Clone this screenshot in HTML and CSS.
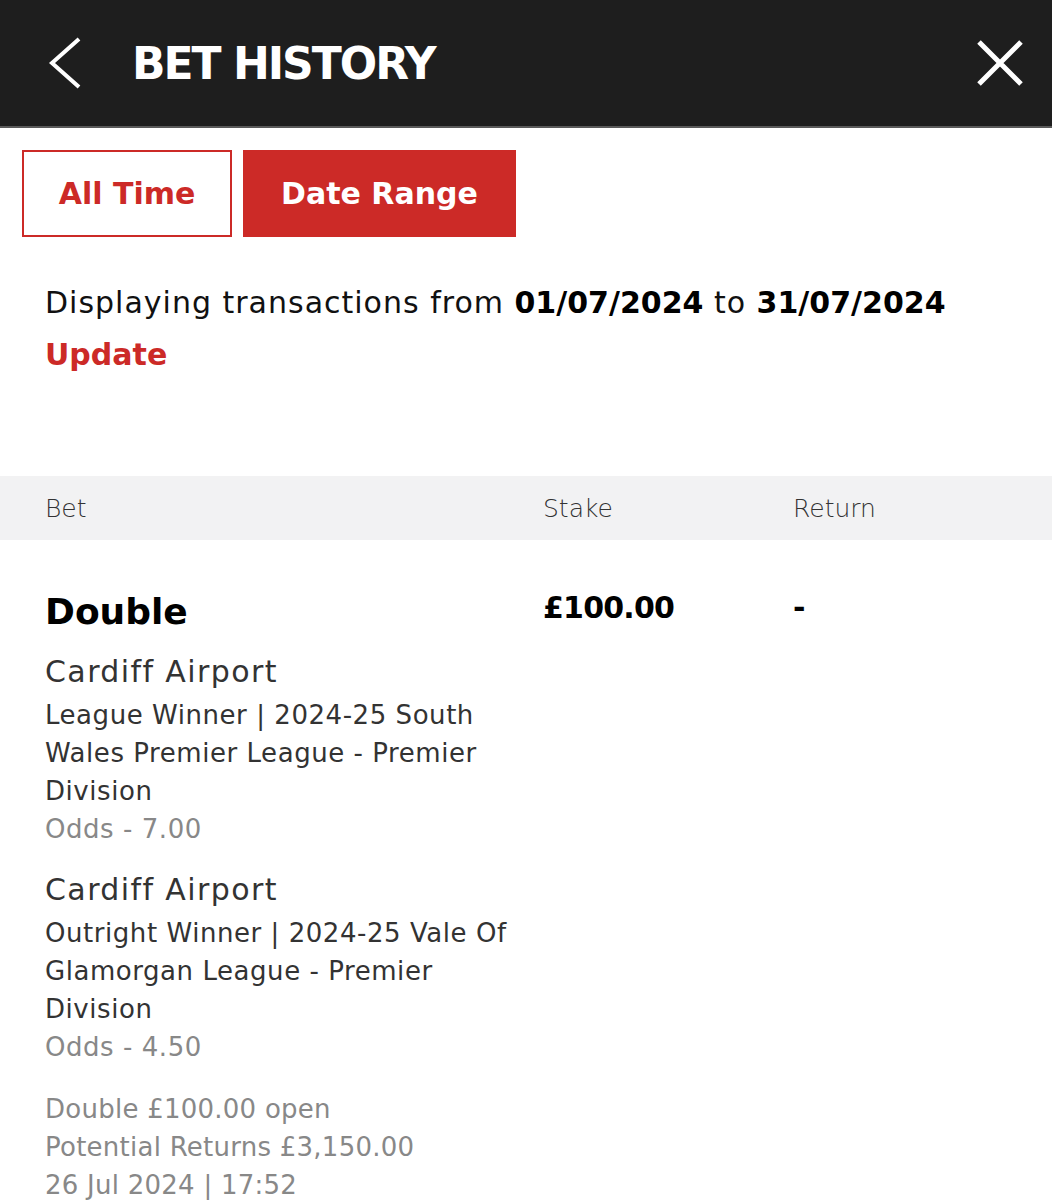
FILE: index.html
```html
<!DOCTYPE html>
<html>
<head>
<meta charset="utf-8">
<link rel="stylesheet" href="styles.css">
</head>
<body>
<header class="topbar">
  <div class="topbar-left">
    <svg class="icon-back" width="34" height="52" viewBox="0 0 34 52"><polyline points="31,2 4,26 31,50" fill="none" stroke="#fff" stroke-width="4"/></svg>
    <h1 class="title">BET HISTORY</h1>
  </div>
  <svg class="icon-close" width="48" height="48" viewBox="0 0 48 48"><path d="M3 3 L45 45 M45 3 L3 45" stroke="#fff" stroke-width="5" fill="none"/></svg>
</header>
<main class="content">
  <div class="tabs">
    <button class="tab tab-outline">All Time</button>
    <button class="tab tab-filled">Date Range</button>
  </div>
  <p class="range">Displaying transactions from <b>01/07/2024</b> to <b>31/07/2024</b></p>
  <a class="update">Update</a>
</main>
<div class="thead">
  <span class="col-bet">Bet</span>
  <span class="col-stake">Stake</span>
  <span class="col-return">Return</span>
</div>
<section class="row">
  <div class="col-bet">
    <div class="bet-type">Double</div>
    <div class="leg">
      <div class="leg-name">Cardiff Airport</div>
      <div class="leg-market">League Winner | 2024-25 South Wales Premier League - Premier Division</div>
      <div class="leg-odds">Odds - 7.00</div>
    </div>
    <div class="leg">
      <div class="leg-name">Cardiff Airport</div>
      <div class="leg-market">Outright Winner | 2024-25 Vale Of Glamorgan League - Premier Division</div>
      <div class="leg-odds">Odds - 4.50</div>
    </div>
    <div class="summary">
      <div>Double £100.00 open</div>
      <div>Potential Returns £3,150.00</div>
      <div>26 Jul 2024 | 17:52</div>
    </div>
  </div>
  <div class="col-stake stake-val">£100.00</div>
  <div class="col-return return-val">-</div>
</section>
</body>
</html>
```
FILE: styles.css
```css
* { box-sizing: border-box; }
html, body { margin: 0; padding: 0; background: #fff; }
body { font-family: "DejaVu Sans", sans-serif; color: #111; width: 1052px; overflow: hidden; }

.topbar {
  height: 128px;
  background: #1e1e1e;
  border-bottom: 2px solid #5a5a5a;
  display: flex;
  align-items: center;
  justify-content: space-between;
  padding: 0 28px 0 48px;
}
.topbar-left { display: flex; align-items: center; gap: 50px; }
.icon-back { display: block; }
.icon-close { display: block; }
.title {
  margin: 0;
  color: #fff;
  font-size: 44px;
  font-weight: bold;
  letter-spacing: -2px;
}

.content { padding: 22px 22px 0 22px; height: 348px; }
.tabs { display: flex; gap: 11px; }
.tab {
  height: 87px;
  font-family: inherit;
  font-size: 30px;
  font-weight: bold;
  border: 2px solid #cc2a27;
  padding: 0;
}
.tab-outline { width: 210px; background: #fff; color: #cc2a27; }
.tab-filled { width: 273px; background: #cc2a27; color: #fff; }

.range {
  margin: 44px 0 0 23px;
  font-size: 30px;
  line-height: 44px;
  color: #111;
  letter-spacing: 1px;
}
.range b { color: #000; letter-spacing: 0; }
.update {
  display: block;
  margin-left: 23px;
  margin-top: 12px;
  font-size: 30px;
  font-weight: bold;
  color: #cc2a27;
}

.thead {
  height: 64px;
  background: #f2f2f3;
  display: flex;
  align-items: center;
  font-size: 25px;
  color: #333;
  font-weight: 200;
}
.col-bet { width: 543px; padding-left: 45px; }
.col-stake { width: 250px; }
.col-return { flex: 1; }

.row { display: flex; padding-top: 50px; }
.bet-type { font-size: 36px; font-weight: bold; color: #000; line-height: 44px; }
.stake-val { font-size: 30px; font-weight: bold; color: #000; line-height: 36px; letter-spacing: -0.8px; }
.return-val { font-size: 30px; font-weight: bold; color: #000; line-height: 36px; }

.leg { margin-top: 18px; padding-right: 20px; }
.leg + .leg { margin-top: 22px; }
.leg-name { font-size: 30px; line-height: 40px; color: #333; margin-bottom: 4px; letter-spacing: 1.4px; }
.leg-market { font-size: 26px; line-height: 38px; color: #333; letter-spacing: 0.55px; }
.leg-odds { font-size: 26px; line-height: 38px; color: #888; letter-spacing: 0.55px; }
.summary { margin-top: 24px; font-size: 26px; line-height: 38px; color: #888; letter-spacing: 0.25px; }
```
